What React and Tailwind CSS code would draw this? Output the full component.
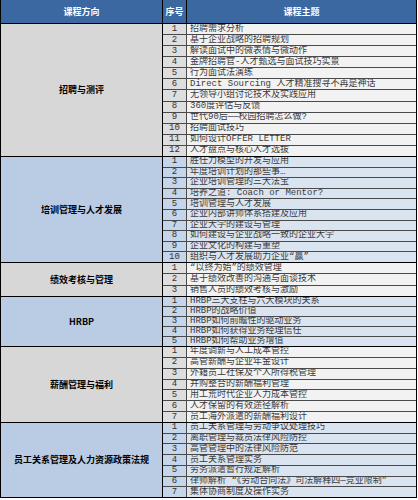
const sections = [
  {
    title: "招聘与测评",
    tone: "gray",
    height: "h-[132px]",
    topics: [
      "招聘需求分析",
      "基于企业战略的招聘规划",
      "解读面试中的微表情与微动作",
      "金牌招聘官-人才甄选与面试技巧实景",
      "行为面试法演练",
      "Direct Sourcing 人才精准搜寻不再是神话",
      "无领导小组讨论技术及实践应用",
      "360度评估与反馈",
      "世代90后——校园招聘怎么做?",
      "招聘面试技巧",
      "如何设计OFFER LETTER",
      "人才盘点与核心人才选拔",
    ],
  },
  {
    title: "培训管理与人才发展",
    tone: "blue",
    height: "h-[106px]",
    topics: [
      "胜任力模型的开发与应用",
      "年度培训计划的那些事…",
      "企业培训管理的三大法宝",
      "培养之道: Coach or Mentor?",
      "培训管理与人才发展",
      "企业内部讲师体系搭建及应用",
      "企业大学的建设与管理",
      "如何建设与企业战略一致的企业大学",
      "企业文化的构建与重塑",
      "组织与人才发展助力企业“赢”",
    ],
  },
  {
    title: "绩效考核与管理",
    tone: "gray",
    height: "h-[34px]",
    topics: [
      "“以终为始”的绩效管理",
      "基于绩效改善的沟通与面谈技术",
      "销售人员的绩效考核与激励",
    ],
  },
  {
    title: "HRBP",
    tone: "blue",
    height: "h-[50px]",
    topics: [
      "HRBP三大支柱与六大模块的关系",
      "HRBP的战略价值",
      "HRBP如何前瞻性的驱动业务",
      "HRBP如何获得业务经理信任",
      "HRBP如何帮助业务增值",
    ],
  },
  {
    title: "薪酬管理与福利",
    tone: "gray",
    height: "h-[76px]",
    topics: [
      "年度调薪与人工成本管控",
      "高管薪酬与企业年金设计",
      "外籍员工社保及个人所得税管理",
      "并购整合的薪酬福利管理",
      "用工荒时代企业人力成本管控",
      "人才保留的有效途径解析",
      "员工海外派遣的薪酬福利设计",
    ],
  },
  {
    title: "员工关系管理及人力资源政策法规",
    tone: "blue",
    height: "h-[75px]",
    topics: [
      "员工关系管理与劳动争议处理技巧",
      "离职管理与裁员法律风险防控",
      "高管管理中的法律风险防范",
      "员工关系管理实务",
      "劳务派遣暂行规定解析",
      "律师解析 “《劳动合同法》司法解释四—竞业限制”",
      "集体协商制度及操作实务",
    ],
  },
];

const toneClasses = {
  gray: { label: "bg-[#d7d7d7]", num: "bg-[#dedede]", topic: "bg-[#f2f2f2]" },
  blue: { label: "bg-[#b9cce4]", num: "bg-[#c5d5ea]", topic: "bg-[#dae4f0]" },
};

const mono = "font-['Liberation_Mono','Noto_Sans_CJK_SC',monospace]";

export default function App() {
  return (
    <div className="w-[418px] h-[500px] bg-white">
      <div className="w-[417px] border-l border-r border-b border-black">
        {/* header */}
        <div className="flex h-[24px] bg-[#3c68a2] border-b border-black text-white text-[9px] font-bold font-['Noto_Sans_CJK_SC',sans-serif]">
          <div className="w-[162px] flex items-center justify-center border-r border-black">
            课程方向
          </div>
          <div className="w-[24px] flex items-center justify-center border-r border-black">
            序号
          </div>
          <div className="flex-1 flex items-center justify-center">课程主题</div>
        </div>

        {sections.map((section, si) => {
          const tone = toneClasses[section.tone];
          return (
            <div
              key={si}
              className={`flex ${section.height} ${si > 0 ? "border-t border-black" : ""}`}
            >
              <div
                className={`w-[162px] flex items-center justify-center border-r border-black ${tone.label} text-[9px] font-bold text-black font-['Noto_Sans_CJK_SC',sans-serif]`}
              >
                {section.title}
              </div>
              <div className="flex-1 flex flex-col">
                {section.topics.map((topic, i) => (
                  <div
                    key={i}
                    className={`flex-1 flex min-h-0 ${i > 0 ? "border-t border-[#4a4a4a]" : ""}`}
                  >
                    <div
                      className={`w-[24px] flex items-center justify-center border-r border-[#4a4a4a] ${tone.num} text-[9px] leading-none text-[#333] ${mono}`}
                    >
                      {i + 1}
                    </div>
                    <div
                      className={`flex-1 flex items-center pl-[3px] ${tone.topic} text-[9px] leading-none text-[#3a3a3a] whitespace-nowrap overflow-hidden ${mono}`}
                    >
                      {topic}
                    </div>
                  </div>
                ))}
              </div>
            </div>
          );
        })}
      </div>
    </div>
  );
}
